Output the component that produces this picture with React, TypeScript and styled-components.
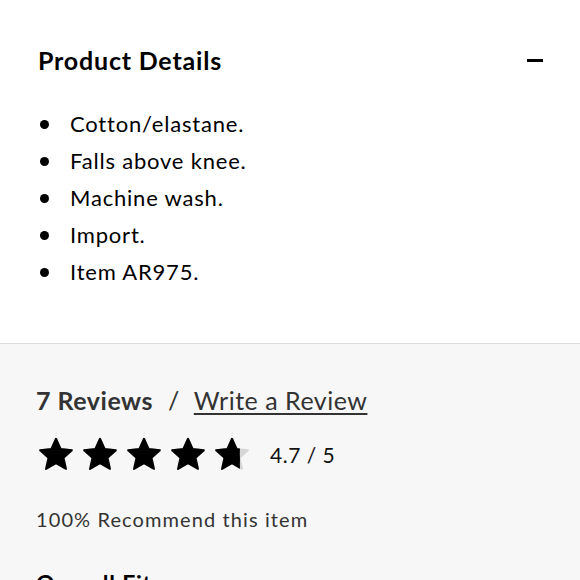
import React from 'react';
import styled, { createGlobalStyle } from 'styled-components';

const GlobalStyle = createGlobalStyle`
  html, body {
    margin: 0;
    padding: 0;
    background: #f7f7f7;
  }
  body {
    font-family: Lato, "Open Sans", Arial, sans-serif;
    color: #000;
  }
`;

const Page = styled.div`
  width: 580px;
  height: 580px;
  overflow: hidden;
`;

const DetailsSection = styled.section`
  background: #ffffff;
  padding: 44px 37px 56px 38px;
  border-bottom: 1px solid #dcdcdc;
`;

const DetailsHeader = styled.div`
  display: flex;
  align-items: center;
  justify-content: space-between;
`;

const SectionTitle = styled.h2`
  margin: 0;
  font-size: 25px;
  font-weight: 700;
  letter-spacing: 0.8px;
  line-height: 32px;
  color: #000;
`;

const CollapseIcon = styled.span`
  display: block;
  width: 16px;
  height: 3px;
  background: #000;
`;

const BulletList = styled.ul`
  list-style: none;
  margin: 33px 0 0;
  padding: 0;
  display: flex;
  flex-direction: column;
  gap: 7px;
`;

const BulletItem = styled.li`
  display: flex;
  align-items: center;
  font-size: 22px;
  letter-spacing: 0.8px;
  line-height: 30px;
  color: #000;

  &::before {
    content: '';
    width: 9px;
    height: 9px;
    border-radius: 50%;
    background: #000;
    margin: 0 21px 0 2px;
    flex-shrink: 0;
  }
`;

const ReviewsSection = styled.section`
  background: #f7f7f7;
  padding: 40px 36px 0;
`;

const ReviewsHeading = styled.div`
  display: flex;
  align-items: baseline;
  font-size: 25px;
  letter-spacing: 0.5px;
  line-height: 32px;
  color: #333;
`;

const ReviewCount = styled.span`
  font-weight: 700;
`;

const Slash = styled.span`
  margin: 0 14px 0 15px;
`;

const WriteLink = styled.a`
  color: #333;
  text-decoration: underline;
  text-decoration-thickness: 2px;
  text-underline-offset: 3px;
`;

const RatingRow = styled.div`
  display: flex;
  align-items: center;
  margin-top: 21px;
`;

const Stars = styled.div`
  display: flex;
  gap: 8px;
  padding-left: 2px;
`;

const RatingText = styled.span`
  margin-left: 20px;
  font-size: 21px;
  letter-spacing: 0.5px;
  color: #111;
`;

const Recommend = styled.p`
  margin: 36px 0 0;
  font-size: 20px;
  letter-spacing: 1.1px;
  color: #333;
`;

const SubTitle = styled.h3`
  margin: 38px 0 0;
  font-size: 23px;
  font-weight: 700;
  letter-spacing: 0.8px;
  color: #000;
`;

const STAR_PATH =
  'M12 2.2l2.9 6.3 6.8.7-5.1 4.6 1.5 6.8L12 17.1l-6.1 3.5 1.5-6.8-5.1-4.6 6.8-.7z';

const Star: React.FC<{ fill: number; id: string }> = ({ fill, id }) => (
  <svg width="36" height="34" viewBox="1 1.5 22 20">
    <defs>
      <clipPath id={id}>
        <rect x="0" y="0" width={24 * fill} height="24" />
      </clipPath>
    </defs>
    <path d={STAR_PATH} fill="#d6d6d6" stroke="#d6d6d6" strokeWidth="1.2" strokeLinejoin="round" />
    <g clipPath={`url(#${id})`}>
      <path d={STAR_PATH} fill="#000" stroke="#000" strokeWidth="1.2" strokeLinejoin="round" />
    </g>
  </svg>
);

const details = [
  'Cotton/elastane.',
  'Falls above knee.',
  'Machine wash.',
  'Import.',
  'Item AR975.',
];

const rating = 4.7;

export default function App() {
  return (
    <Page>
      <GlobalStyle />
      <DetailsSection>
        <DetailsHeader>
          <SectionTitle>Product Details</SectionTitle>
          <CollapseIcon />
        </DetailsHeader>
        <BulletList>
          {details.map((d) => (
            <BulletItem key={d}>{d}</BulletItem>
          ))}
        </BulletList>
      </DetailsSection>
      <ReviewsSection>
        <ReviewsHeading>
          <ReviewCount>7 Reviews</ReviewCount>
          <Slash>/</Slash>
          <WriteLink href="#">Write a Review</WriteLink>
        </ReviewsHeading>
        <RatingRow>
          <Stars>
            {[0, 1, 2, 3, 4].map((i) => (
              <Star key={i} id={`star-${i}`} fill={Math.max(0, Math.min(1, rating - i))} />
            ))}
          </Stars>
          <RatingText>4.7 / 5</RatingText>
        </RatingRow>
        <Recommend>100% Recommend this item</Recommend>
        <SubTitle>Overall Fit</SubTitle>
      </ReviewsSection>
    </Page>
  );
}
